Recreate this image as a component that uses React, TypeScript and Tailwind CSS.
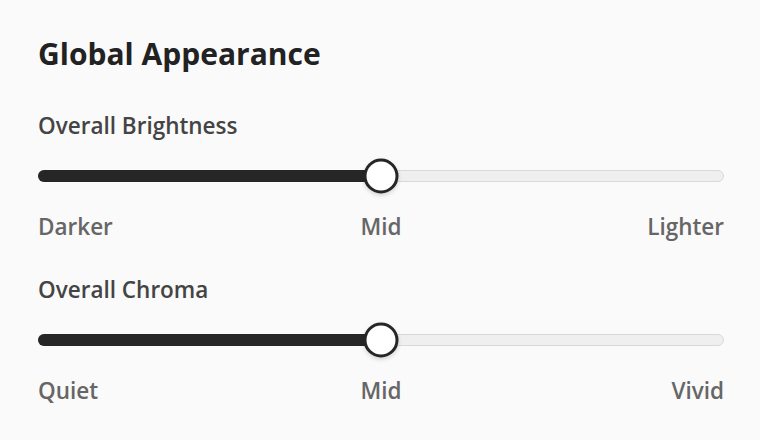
import React from 'react';

const font = { fontFamily: '"Open Sans", "Noto Sans", sans-serif' };

interface SliderRowProps {
  label: string;
  low: string;
  mid: string;
  high: string;
  value: number;
}

function SliderRow({ label, low, mid, high, value }: SliderRowProps) {
  return (
    <div className="flex flex-col">
      <div className="text-[22.5px] leading-[30px] font-semibold text-[#444]">{label}</div>

      {/* Track */}
      <div className="relative mt-[29px] h-[12px] rounded-full bg-[#efefef] border border-[#d9d9d9]">
        <div
          className="absolute left-[-1px] top-[-1px] bottom-[-1px] rounded-full bg-[#262626]"
          style={{ width: `${value}%` }}
        />
        <div
          className="absolute top-1/2 w-[35px] h-[35px] -translate-x-1/2 -translate-y-1/2 rounded-full bg-white border-[3px] border-[#262626] shadow-[0_2px_4px_rgba(0,0,0,0.15)]"
          style={{ left: `${value}%` }}
        />
      </div>

      {/* Ticks */}
      <div className="grid grid-cols-3 mt-[30px] text-[22.5px] leading-[30px] font-semibold text-[#666]">
        <span className="text-left">{low}</span>
        <span className="text-center">{mid}</span>
        <span className="text-right">{high}</span>
      </div>
    </div>
  );
}

export default function App() {
  return (
    <div className="w-[760px] h-[440px] bg-[#fafafa] pl-[38px] pr-[36px] pt-[34px]" style={font}>
      <h2 className="text-[30px] leading-[40px] font-bold text-[#222]">Global Appearance</h2>
      <div className="mt-[37px] flex flex-col gap-[33px]">
        <SliderRow label="Overall Brightness" low="Darker" mid="Mid" high="Lighter" value={50} />
        <SliderRow label="Overall Chroma" low="Quiet" mid="Mid" high="Vivid" value={50} />
      </div>
    </div>
  );
}
